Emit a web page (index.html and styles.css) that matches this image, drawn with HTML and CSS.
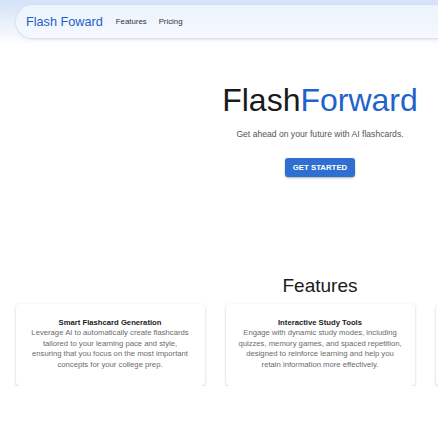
FILE: index.html
```html
<!DOCTYPE html>
<html>
<head>
<meta charset="utf-8">
<link rel="stylesheet" href="styles.css">
</head>
<body>
<div class="page">
  <header class="topbar">
    <nav class="nav">
      <span class="brand">Flash Foward</span>
      <a class="nav-link">Features</a>
      <a class="nav-link">Pricing</a>
    </nav>
  </header>
  <section class="hero">
    <h1 class="hero-title">Flash<span class="accent">Forward</span></h1>
    <p class="hero-sub">Get ahead on your future with AI flashcards.</p>
    <button class="cta">GET STARTED</button>
  </section>
  <section class="features">
    <h2 class="features-title">Features</h2>
    <div class="cards">
      <div class="card">
        <h3 class="card-title">Smart Flashcard Generation</h3>
        <p class="card-text">Leverage AI to automatically create flashcards<br>tailored to your learning pace and style,<br>ensuring that you focus on the most important<br>concepts for your college prep.</p>
      </div>
      <div class="card">
        <h3 class="card-title">Interactive Study Tools</h3>
        <p class="card-text">Engage with dynamic study modes, including<br>quizzes, memory games, and spaced repetition,<br>designed to reinforce learning and help you<br>retain information more effectively.</p>
      </div>
      <div class="card card-offscreen"></div>
    </div>
  </section>
</div>
</body>
</html>
```
FILE: styles.css
```css
html, body {
  margin: 0;
  padding: 0;
}
body {
  font-family: "Liberation Sans", Arial, sans-serif;
  background: linear-gradient(to bottom, #d3e2f7 0px, #ffffff 46px) no-repeat;
  background-color: #ffffff;
  overflow: hidden;
}
.page {
  width: 640px;
}
.topbar {
  padding: 5px 0 0 16px;
}
.nav {
  display: flex;
  align-items: center;
  height: 33px;
  width: 640px;
  padding-left: 10px;
  box-sizing: border-box;
  border-radius: 17px;
  background: linear-gradient(to bottom, #ecf3fe, #f5f8fe);
  box-shadow: 0 1px 3px rgba(120, 140, 180, 0.35);
}
.brand {
  color: #1f5fc5;
  font-size: 12.7px;
  margin-right: 13px;
}
.nav-link {
  color: #333;
  font-size: 7.8px;
  margin-right: 12px;
}
.hero {
  display: flex;
  flex-direction: column;
  align-items: center;
  padding-top: 44px;
}
.hero-title {
  margin: 0;
  font-weight: 300;
  font-size: 32px;
  line-height: 36px;
  color: #1a1a1a;
}
.accent {
  color: #1f63cb;
}
.hero-sub {
  margin: 11px 0 0;
  font-size: 8.6px;
  color: #555;
}
.cta {
  margin-top: 19px;
  width: 70px;
  height: 19px;
  border: none;
  border-radius: 3px;
  background: #2f6fd1;
  color: #fff;
  font-family: "Liberation Sans", Arial, sans-serif;
  font-weight: bold;
  font-size: 7.8px;
  padding: 0;
  box-shadow: 0 1px 2px rgba(0,0,0,0.3);
}
.features {
  display: flex;
  flex-direction: column;
  align-items: center;
  padding-top: 97px;
}
.features-title {
  margin: 0;
  font-weight: 400;
  font-size: 19px;
  line-height: 24px;
  color: #1a1a1a;
}
.cards {
  display: grid;
  grid-template-columns: repeat(3, 189px);
  gap: 21px;
  margin-top: 6px;
}
.card {
  background: #fff;
  border-radius: 4px;
  box-shadow: 0 1px 3px rgba(0,0,0,0.18), 0 1px 1px rgba(0,0,0,0.08);
  padding: 14px 6px 12px;
  text-align: center;
  height: 82px;
  box-sizing: border-box;
}
.card-title {
  margin: 0;
  font-size: 7.7px;
  line-height: 10px;
  font-weight: bold;
  color: #222;
}
.card-text {
  margin: 0;
  font-size: 7.7px;
  line-height: 10.6px;
  color: #6b6b6b;
  white-space: nowrap;
}
```
